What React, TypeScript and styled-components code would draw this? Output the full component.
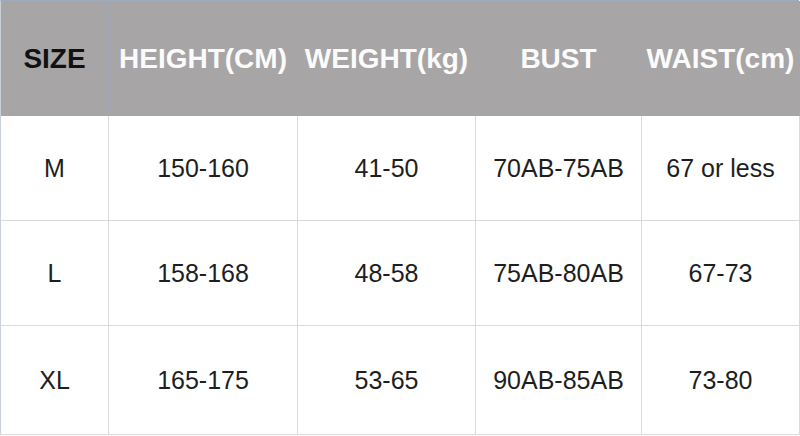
import styled, { createGlobalStyle } from 'styled-components'

const Global = createGlobalStyle`
    body {
        margin: 0;
        background: #ffffff;
        font-family: "Liberation Sans", Arial, sans-serif;
    }
`

const Table = styled.div`
    display: grid;
    grid-template-columns: 108px 189px 178px 166px 158px;
    grid-template-rows: 115px 105px 105px 109px;
    width: 799px;
    box-sizing: border-box;
    border-left: 1px solid #c9d0d8;
    border-top: 1px solid #9eabbb;
`

const HeadCell = styled.div<{ $dark?: boolean }>`
    display: flex;
    align-items: center;
    justify-content: center;
    box-sizing: border-box;
    background: #a7a5a6;
    border-right: 1px solid #9aa8ba;
    color: ${p => (p.$dark ? '#111111' : '#fbfbfb')};
    font-size: 28px;
    font-weight: bold;
    white-space: nowrap;
`

const Cell = styled.div`
    display: flex;
    align-items: center;
    justify-content: center;
    box-sizing: border-box;
    border-right: 1px solid #d9d9d9;
    border-bottom: 1px solid #d9d9d9;
    color: #1e1e1e;
    font-size: 25px;
    white-space: nowrap;
`

const headers = ['SIZE', 'HEIGHT(CM)', 'WEIGHT(kg)', 'BUST', 'WAIST(cm)']

const rows = [
    ['M', '150-160', '41-50', '70AB-75AB', '67 or less'],
    ['L', '158-168', '48-58', '75AB-80AB', '67-73'],
    ['XL', '165-175', '53-65', '90AB-85AB', '73-80'],
]

export default function App() {
    return (
        <>
            <Global />
            <Table>
                {headers.map((h, i) => (
                    <HeadCell key={h} $dark={i === 0}>{h}</HeadCell>
                ))}
                {rows.map(r => r.map((v, i) => <Cell key={r[0] + i}>{v}</Cell>))}
            </Table>
        </>
    )
}
